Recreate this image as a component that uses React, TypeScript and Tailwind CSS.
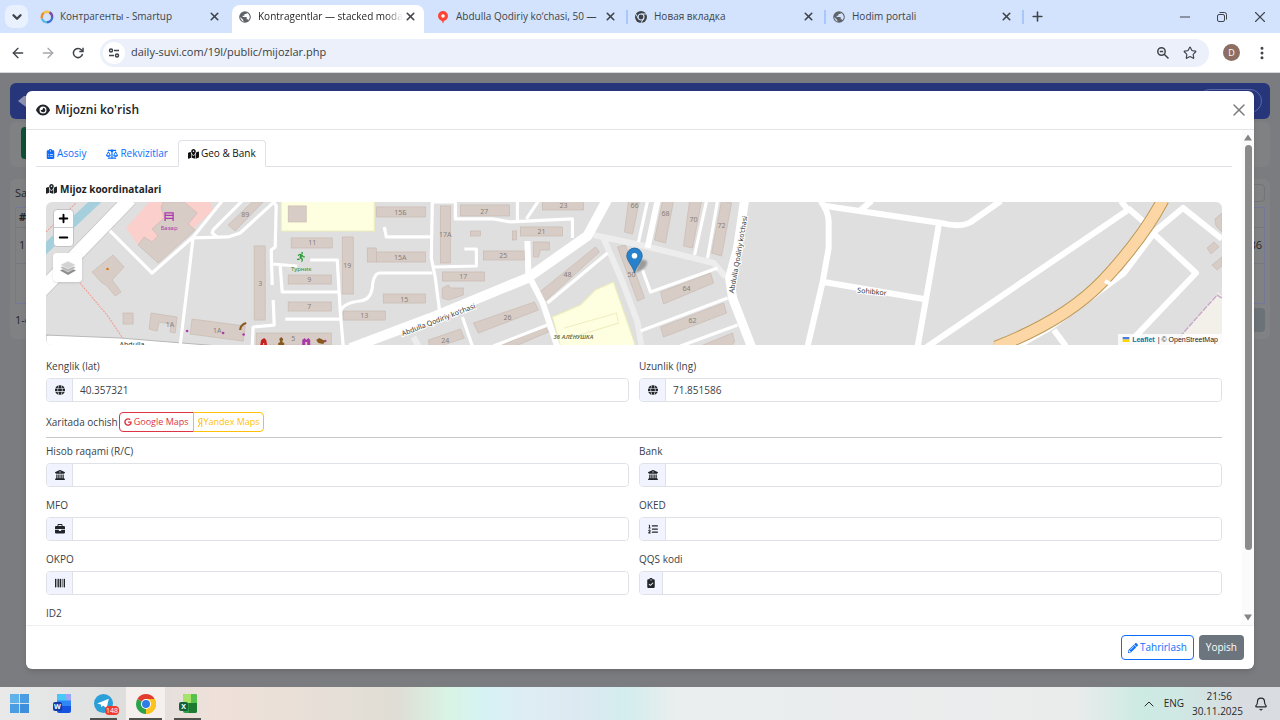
import type { ComponentType, ReactNode } from "react";
import { clsx } from "clsx";
import { FaPencilAlt } from "react-icons/fa";
import {
  FaBarcode,
  FaBriefcase,
  FaBuildingColumns,
  FaClipboardCheck,
  FaClipboardList,
  FaEye,
  FaGlobe,
  FaGoogle,
  FaListOl,
  FaMapLocationDot,
  FaPersonRunning,
  FaScaleBalanced,
  FaYandex,
} from "react-icons/fa6";
import {
  ArrowLeft,
  ArrowRight,
  Bell,
  ChevronDown,
  ChevronUp,
  EllipsisVertical,
  Minus,
  Plus,
  Star,
  X,
} from "lucide-react";

type IconType = ComponentType<{ className?: string }>;

function SmartupIcon() {
  return (
    <svg viewBox="0 0 14 14" className="size-[14px]" fill="none" strokeWidth="2.4">
      <path d="M2 8.5A5.2 5.2 0 0 1 4 2.8" stroke="#f28c28" />
      <path d="M4 2.8A5.2 5.2 0 0 1 9.5 2.4" stroke="#f6c344" />
      <path d="M9.5 2.4A5.2 5.2 0 0 1 12.2 7" stroke="#7b4fa3" />
      <path d="M12.2 7A5.2 5.2 0 0 1 7 12.2" stroke="#3a6fd8" />
      <path d="M7 12.2A5.2 5.2 0 0 1 2 8.5" stroke="#59b7e8" />
    </svg>
  );
}

function GlobeIcon() {
  return (
    <svg viewBox="0 0 24 24" className="size-[14px]" fill="#5f6368">
      <path d="M12 2a10 10 0 1 0 0 20 10 10 0 0 0 0-20Zm-8 10 5 5v1a2 2 0 0 0 2 2c-4-.4-7-4-7-8Zm14 5.4a2 2 0 0 0-2-1.4h-1v-3a1 1 0 0 0-1-1H8v-2h2a1 1 0 0 0 1-1V7h2a2 2 0 0 0 2-2v-.4a8 8 0 0 1 3 12.800Z" />
    </svg>
  );
}

function PinIcon() {
  return (
    <svg viewBox="0 0 14 14" className="size-[14px]">
      <path d="M7 1a5 5 0 0 0-5 5c0 2.6 2 4.2 4 5l1 2.6L8 11c2-.8 4-2.4 4-5a5 5 0 0 0-5-5Z" fill="#f43" />
      <circle cx="7" cy="6" r="1.8" fill="#fff" />
    </svg>
  );
}

function ChromeGrayIcon() {
  return (
    <svg viewBox="0 0 14 14" className="size-[14px]">
      <circle cx="7" cy="7" r="6" fill="#3f4347" />
      <circle cx="7" cy="7" r="3" fill="#3f4347" stroke="#d3e3fd" strokeWidth="1.2" />
      <path d="M7 4h5.500M4.400 8.500 1.800 4M9.600 8.500 7 13" stroke="#d3e3fd" />
    </svg>
  );
}

const browserTabs = [
  { title: "Контрагенты - Smartup", icon: <SmartupIcon /> },
  { title: "Kontragentlar — stacked modal", icon: <GlobeIcon />, active: true },
  { title: "Abdulla Qodiriy ko‘chasi, 50 —", icon: <PinIcon /> },
  { title: "Новая вкладка", icon: <ChromeGrayIcon /> },
  { title: "Hodim portali", icon: <GlobeIcon /> },
];

function TabStrip() {
  return (
    <div className="flex h-[33px] shrink-0 bg-[#d3e3fd] pl-[5px] text-[#40444a]">
      <button
        aria-label="Search tabs"
        className="mt-[5px] mr-[6px] flex size-[23px] shrink-0 items-center justify-center rounded-lg bg-[#e9f1fe]"
      >
        <ChevronDown className="size-[14px]" strokeWidth={4} />
      </button>
      {browserTabs.map((tab, i) => (
        <div
          key={tab.title}
          className={clsx(
            "flex min-w-0 flex-1 items-center pl-[6px]",
            tab.active
              ? "mt-[5px] mr-[6px] max-w-[192px] rounded-t-lg bg-white pb-[5px]"
              : "max-w-[198px]"
          )}
        >
          <span className="shrink-0">{tab.icon}</span>
          <span
            className={clsx(
              "ml-[6px] flex-1 overflow-hidden text-[10px] whitespace-nowrap",
              tab.active &&
                "text-[#1f1f1f] [mask-image:linear-gradient(to_right,#000_88%,transparent)]"
            )}
          >
            {tab.title}
          </span>
          <button
            aria-label={`Close ${tab.title}`}
            className={clsx("ml-px shrink-0", tab.active ? "mr-[5px]" : "mr-[9px]")}
          >
            <X className="size-[13px]" strokeWidth={3} />
          </button>
          <span
            className={clsx("h-[14px] w-[2px] shrink-0", i > 1 && "bg-[#a8c7fa]")}
          />
        </div>
      ))}
      <button aria-label="New tab" className="ml-[6px] shrink-0">
        <Plus className="size-[15px]" strokeWidth={2.5} />
      </button>
      <div className="ml-auto flex shrink-0 items-center gap-[21px] pr-[11px]">
        <button aria-label="Minimize">
          <Minus className="size-4" strokeWidth={1.5} />
        </button>
        <button aria-label="Restore">
          <svg viewBox="0 0 16 16" className="size-4" fill="none" stroke="currentColor">
            <rect x="3.5" y="5.5" width="7" height="7" rx="1.5" />
            <path d="M5.500 3.500h5a2 2 0 0 1 2 2v5" />
          </svg>
        </button>
        <button aria-label="Close window">
          <X className="size-[18px]" strokeWidth={1.5} />
        </button>
      </div>
    </div>
  );
}

function Toolbar() {
  return (
    <div className="flex h-10 shrink-0 items-center border-b border-[#d5d7da] bg-white px-[10px] text-[#40444a]">
      <button aria-label="Back">
        <ArrowLeft className="size-4" />
      </button>
      <button aria-label="Forward" className="ml-[14px] text-[#a5a7aa]">
        <ArrowRight className="size-4" />
      </button>
      <button aria-label="Reload" className="ml-[14px]">
        <svg viewBox="0 0 16 16" className="size-4" fill="none" stroke="currentColor" strokeWidth="1.5">
          <path d="M12.500 9A4.600 4.600 0 1 1 11.500 5L12.800 6.300" />
          <path d="M13 2.800V6.500H9.300" />
        </svg>
      </button>
      <div className="ml-[14px] flex h-7 flex-1 items-center rounded-full bg-[#ebf0fa] pr-3 pl-[3px]">
        <button
          aria-label="Site information"
          className="flex size-[22px] items-center justify-center rounded-full bg-white"
        >
          <svg viewBox="0 0 12 12" className="size-3" fill="none" stroke="currentColor" strokeWidth="1.5">
            <circle cx="3" cy="3.5" r="1.5" />
            <path d="M6 3.500h5M1 8.500h5" />
            <circle cx="9" cy="8.5" r="1.5" />
          </svg>
        </button>
        <input
          aria-label="Address"
          defaultValue="daily-suvi.com/19l/public/mijozlar.php"
          className="ml-[6px] min-w-0 flex-1 bg-transparent text-[11px] text-[#3a3d42] outline-none"
        />
        <button aria-label="Zoom">
          <svg viewBox="0 0 14 14" className="size-[14px]" fill="none" stroke="currentColor" strokeWidth="1.5">
            <circle cx="5.5" cy="5.5" r="3.7" />
            <path d="M8.200 8.200 12.500 12.500M3.800 5.500h3.400" />
          </svg>
        </button>
        <button aria-label="Bookmark" className="ml-[13px]">
          <Star className="size-[14px]" />
        </button>
      </div>
      <button className="ml-[14px] flex size-[17px] items-center justify-center rounded-full bg-[#8d6e63] text-[9px] text-white">
        D
      </button>
      <button aria-label="Menu" className="ml-[14px]">
        <EllipsisVertical className="size-4" strokeWidth={2.5} />
      </button>
    </div>
  );
}

// The dimmed customer list under the dialog
function PageBehind() {
  return (
    <div className="h-full px-[10px] pt-[10px] text-[11px] text-[#24262b]">
      <div className="flex h-9 items-center rounded-md bg-[#27357b] px-2">
        <svg viewBox="0 0 16 12" className="h-3 w-4" fill="#8d93b0">
          <path d="M0 6 6 1h6l4 5-8 6Z" />
        </svg>
        <span className="ml-auto h-6 w-16 rounded-full border border-[#5b68a8]" />
      </div>
      <div className="mt-[3px] h-[45px] rounded-md bg-[#808183] p-[5px]">
        <div className="ml-[6px] h-8 w-12 rounded-sm bg-[#0f5135]" />
      </div>
      <div className="mt-3 h-[160px] rounded-md bg-[#808183] px-[5px] pt-1">
        <div className="flex h-5 items-center justify-between">
          <span>Sa</span>
          <span className="h-[18px] w-20 rounded-sm border border-[#727478]" />
        </div>
        <table className="mt-1 h-[96px] w-full border border-[#74779a]">
          <tbody>
            <tr className="h-5 border-b border-[#74777d]">
              <th className="pl-[3px] text-left">#</th>
              <th />
            </tr>
            <tr className="h-9 border-b border-[#74777d]">
              <td className="pl-[3px]">1</td>
              <td className="pr-[2px] text-right">86</td>
            </tr>
            <tr className="h-10">
              <td />
              <td />
            </tr>
          </tbody>
        </table>
        <div className="mt-1 flex items-center justify-between">
          <span>1-d</span>
          <span className="h-6 w-8 rounded-sm bg-[#6c7378]" />
        </div>
      </div>
    </div>
  );
}

const blocks = [
  [288, 206, 18, 16], [291, 238, 41, 10], [288, 275, 43, 9], [288, 302, 43, 9],
  [256, 333, 75, 12], [254, 246, 11, 74], [123, 313, 10, 11], [376, 207, 49, 10],
  [342, 237, 11, 57], [440, 206, 10, 57], [460, 205, 49, 11], [542, 201, 41, 9],
  [520, 227, 42, 9], [483, 251, 41, 9], [376, 252, 49, 10], [367, 248, 9, 14],
  [442, 272, 42, 9], [383, 294, 42, 9], [343, 311, 42, 9], [470, 231, 10, 5],
  [512, 231, 4, 9],
];

const buildings = [
  "M138 245 144 237 152 242 158 236 152 229 164 218 161 207 163 202H184L197 213 188 224 195 230 158 263Z",
  "M92 272 113 255 124 267 112 280 121 292 115 296 106 285 102 283Z",
  "M151 313 177 317 175 333 170 332 171 324 159 322 157 331 149 329Z",
  "M192 319 245 326 243 341 190 334Z",
  "M228 225 252 202H263L235 231Z",
  "M533 242H549V250H540L538 257H533Z",
  "M442 288 448 285 450 288H463V295L448 300 442 298Z",
  "M473 323 534 302 538 310 478 333Z",
  "M428 340 460 329 464 338 440 346H429Z",
  "M500 346 544 326 548 332 515 346Z",
  "M538 293 595 247 599 252 545 301Z",
  "M617 247 625 245 644 298 637 301Z",
  "M628 201H639L632 234 624 232Z",
  "M662 201H673L665 243 654 240Z",
  "M689 201H701L692 248 683 246Z",
  "M721 201 731 203 721 256 711 253Z",
  "M660 292 710 273 713 283 663 304Z",
  "M660 327 723 303 726 313 663 337Z",
  "M700 346 732 333 734 342 730 346Z",
  "M1206 248 1213 242 1218 247 1210 254Z",
  "M1211 265 1221 257V266L1216 270Z",
  "M1214 219 1221 213V232L1215 226Z",
];

const lanes = [
  "M107 228 152 273 193 237 222 201",
  "M193 237 190 263 180 346",
  "M193 238 228 237 240 233 275 201",
  "M217 237 212 233 213 230 242 201",
  "M273 201 276 206 275 247 271 250 272 285",
  "M272 264 297 266M280 266 282 292H338M310 260H337L340 312 343 346M285 319H340",
  "M273 300 274 325 253 327 252 346",
  "M432 201 431 258 435 278 440 317",
  "M384 227 386 237H431M434 267 476 266V249H464",
  "M432 273H380Q373 273 372 288 370 300 360 301 342 303 340 312",
  "M432 202H455V219H493L510 222 572 219V238",
  "M517 201V220M538 201 526 219",
  "M547 303 607 253M462 317 472 346M493 346 547 325",
  "M647 201 638 242M706 201 694 255M717 201 707 258",
  "M642 270 650 292 717 268M640 331 727 298M680 346 737 325",
];

const streets = [
  "M527 241 528 275 542 302 557 347",
  "M657 201 647 248",
  "M820 201Q828 212 828 222V248L822 282 807 346",
  "M825 206 940 223Q960 228 970 222L1000 201M860 210 871 201",
  "M938 225 930 272 917 346M823 282 923 299",
  "M926 347 1127 210 1120 201M1127 208 1143 222",
  "M1153 233 1123 273 1100 290 1050 327 1015 347",
  "M1152 233 1182 208 1221 239M1153 234 1195 273 1130 341M1053 330 1065 346",
];

const houseNumbers: [string, number, number][] = [
  ["89", 245, 217], ["11", 312, 245], ["9", 309, 282], ["7", 309, 309],
  ["5", 293, 341], ["3", 260, 286], ["1A", 170, 327], ["1A", 217, 333],
  ["15Б", 400, 215], ["19", 347, 268], ["17A", 445, 237], ["27", 484, 214],
  ["23", 563, 208], ["21", 541, 234], ["25", 503, 258], ["15A", 400, 260],
  ["17", 463, 279], ["15", 404, 302], ["13", 364, 318], ["48", 567, 277],
  ["26", 507, 320], ["24", 445, 343], ["50", 631, 277], ["66", 634, 208],
  ["68", 665, 216], ["70", 693, 222], ["72", 721, 228], ["64", 686, 291],
  ["62", 692, 323],
];

function StreetMap() {
  return (
    <svg
      viewBox="46 202 1175 143"
      preserveAspectRatio="xMidYMid slice"
      className="h-full w-full bg-[#dfdfdf]"
      fontFamily="'Noto Sans', sans-serif"
      textAnchor="middle"
    >
      <path d="M126 228 150 201H210L213 210 171 250 158 262 138 245Z" fill="#fbcfcb" />
      <path d="M281 201H374V231H281Z" fill="#fefee0" stroke="#eeeeb8" />
      <path d="M552 317 580 305 595 290 613 282 635 346H560Z" fill="#fefee0" stroke="#eeeeb8" />
      <path d="M564 328 616 313 618 323 573 337" fill="none" stroke="#eeeec0" />
      <path d="M1217 292 1221 296V346H1170Z" fill="#f3efe9" />
      <path d="M1221 298 1216 295 1176 340" fill="none" stroke="#c5aacb" strokeWidth="1.5" strokeDasharray="6 1" />
      <path d="M42 252 98 199" stroke="#a5cfdd" strokeWidth="9" />
      <path d="M46 232 76 203M80 283 107 315 128 346" fill="none" stroke="#f29a92" strokeDasharray="2 1" />
      <path d="M46 335 120 338 220 346H46Z" fill="#fff" stroke="#b8b8b8" />

      <g fill="#d8cdc6" stroke="#c8bab1" strokeWidth=".7">
        {blocks.map(([x, y, w, h]) => (
          <rect key={`${x}-${y}`} x={x} y={y} width={w} height={h} />
        ))}
        {buildings.map((d) => (
          <path key={d} d={d} />
        ))}
      </g>

      <g fill="none" strokeLinejoin="round">
        <path d="M593 235 640 245 713 263 725 277M603 238 622 282 637 322 641 347M413 337 418 346" stroke="#ededed" strokeWidth="6" />
        <g stroke="#fff" strokeWidth="3.2">
          {lanes.map((d) => (
            <path key={d} d={d} />
          ))}
        </g>
        <g stroke="#fff" strokeWidth="6">
          {streets.map((d) => (
            <path key={d} d={d} />
          ))}
        </g>
        <path d="M40 292 130 199" stroke="#c4c4c4" strokeWidth="15" />
        <path d="M40 292 130 199" stroke="#fff" strokeWidth="13.5" />
        <path d="M350 348 430 318 527 278 587 236 607 199" stroke="#fff" strokeWidth="10" />
        <path d="M744 200 737 248 729 278 732 298 751 347" stroke="#fff" strokeWidth="9" />
        <path d="M1162 200Q1142 238 1103 280 1065 320 995 347" stroke="#bd9a58" strokeWidth="13" />
        <path d="M1162 200Q1142 238 1103 280 1065 320 995 347" stroke="#fcd6a4" strokeWidth="11" />
        <path d="M1104 281 1110 284" stroke="#fff" strokeWidth="4" />
      </g>

      <g fill="#85807c" fontSize="7">
        {houseNumbers.map(([n, x, y]) => (
          <text key={`${n}-${x}`} x={x} y={y}>
            {n}
          </text>
        ))}
      </g>

      <g fill="#333" stroke="#fff" strokeWidth="2" paintOrder="stroke" fontSize="7">
        <text transform="translate(439 322) rotate(-21)">Abdulla Qodiriy ko‘chasi</text>
        <text transform="translate(740 255) rotate(-80)">Abdulla Qodiriy ko‘chasi</text>
        <text transform="translate(871 294) rotate(6)">Sohibkor</text>
        <text x="132" y="347">Abdulla</text>
      </g>
      <text x="573" y="339" fontSize="6" fontStyle="italic" fontWeight="600" fill="#6b6b3a">36 АЛЁНУШКА</text>
      <text x="169" y="230" fontSize="6" fill="#ac39ac">Базар</text>
      <path d="M165 221V213H173V221M165 215.500H173M165 218.500H173" fill="none" stroke="#ac39ac" strokeWidth="1.3" />
      <text x="301" y="271" fontSize="6" fill="#1f8f2f">Турник</text>
      <FaPersonRunning x="296" y="252" width="10" height="10" color="#2f9e3a" />

      <circle cx="107.5" cy="269" r="1.3" fill="#d9790b" />
      <g fill="#ac39ac">
        <circle cx="187" cy="331" r="1.3" />
        <circle cx="223" cy="333" r="1.3" />
        <circle cx="243.5" cy="334.5" r="1.3" />
        <circle cx="325" cy="341" r="1.3" />
        <path d="M302 345V340L304.500 338 306 340 308 338 310 340V345H307V342H305V345Z" />
      </g>
      <path d="M240 330Q240 325 246 323" fill="none" stroke="#87591c" strokeWidth="2.2" />
      <path d="M260 345 261 340 264 338 266 340 267 345H264V343H263V345Z" fill="#c81e1e" />
      <path d="M278 345V343L280 342 279 339 281 337 283 339 282 342 284 343V345Z" fill="#87591c" />
      <path d="M316 340 319 338 325 341 323 344 318 343Z" fill="#87591c" />
    </svg>
  );
}

function MapPanel() {
  return (
    <div className="relative h-[143px] overflow-hidden rounded-md">
      <StreetMap />
      <div className="absolute top-[7px] left-[7px] flex flex-col rounded-sm border border-[#c3c3c3] bg-white text-black">
        <button aria-label="Zoom in" className="flex h-[18px] w-[19px] items-center justify-center border-b border-[#ccc]">
          <Plus className="size-[13px]" strokeWidth={3.5} />
        </button>
        <button aria-label="Zoom out" className="flex h-[18px] w-[19px] items-center justify-center">
          <Minus className="size-[13px]" strokeWidth={3.5} />
        </button>
      </div>
      <button
        aria-label="Layers"
        className="absolute top-[51px] left-[7px] flex size-[29px] items-center justify-center rounded bg-white shadow"
      >
        <svg viewBox="0 0 18 18" className="size-[18px]">
          <path d="M1 11.500 9 7.500 17 11.500 9 16Z" fill="#8e8e8e" />
          <path d="M1 8.500 9 4.500 17 8.500 9 13Z" fill="#b5b5b5" stroke="#fff" strokeWidth=".5" />
          <path d="M1 6 9 2 17 6 9 10Z" fill="#d3d3d3" stroke="#fff" strokeWidth=".5" />
        </svg>
      </button>
      <svg viewBox="0 0 30 28" className="absolute top-[45px] left-1/2 h-7 w-[30px] -translate-x-[8px]">
        <path d="M9 26 14 13Q22 12 21 17 19 23 9 26Z" fill="#000" opacity=".3" className="blur-[1px]" />
        <path
          d="M8.500 26C7 19 .800 14 .800 8.800A7.700 7.700 0 0 1 16.200 8.800C16.200 14 10 19 8.500 26Z"
          fill="#2a81cb"
          stroke="#2a6fa8"
        />
        <circle cx="8.5" cy="8.8" r="2.8" fill="#fff" />
      </svg>
      <div className="absolute right-0 bottom-0 flex items-center bg-white/80 px-1 font-['Liberation_Sans',sans-serif] text-[7px] leading-[11px] text-[#222]">
        <svg viewBox="0 0 8 6" className="mr-[2px] h-[5px] w-2">
          <path d="M0 0h8v3H0Z" fill="#4c7be1" />
          <path d="M0 3h8v3H0Z" fill="#ffd500" />
        </svg>
        <a href="#leaflet" className="font-bold text-[#0078a8]">
          Leaflet
        </a>
        <span className="ml-[3px]">| © OpenStreetMap</span>
      </div>
    </div>
  );
}

function Field({
  id,
  label,
  icon: Icon,
  value,
  narrow,
}: {
  id: string;
  label: string;
  icon: IconType;
  value?: string;
  narrow?: boolean;
}) {
  return (
    <div>
      <label htmlFor={id} className="mb-1 block leading-4 text-[#3c4045]">
        {label}
      </label>
      <div className="flex h-6 rounded border border-[#dee2e6]">
        <span
          className={clsx(
            "flex shrink-0 items-center justify-center rounded-l-[3px] border-r border-[#dee2e6] bg-[#f1f4ff]",
            narrow ? "w-[23px]" : "w-[26px]"
          )}
        >
          <Icon className="size-[10px]" />
        </span>
        <input
          id={id}
          defaultValue={value}
          className="min-w-0 flex-1 rounded-r bg-white px-[7px] text-[#3c4045] outline-none"
        />
      </div>
    </div>
  );
}

function NavTab({
  icon: Icon,
  iconClass,
  active,
  children,
}: {
  icon: IconType;
  iconClass: string;
  active?: boolean;
  children: ReactNode;
}) {
  return (
    <button
      role="tab"
      aria-selected={!!active}
      className={clsx(
        "-mb-px flex h-[27px] items-center gap-[2px] rounded-t border px-[9px]",
        active
          ? "border-[#dee2e6] border-b-white bg-white text-[#111]"
          : "border-transparent text-[#0d6efd]"
      )}
    >
      <Icon className={iconClass} />
      {children}
    </button>
  );
}

function Scrollbar() {
  return (
    <div className="flex w-3 shrink-0 flex-col items-center bg-[#fbfbfb] py-1">
      <svg viewBox="0 0 8 6" className="h-[7px] w-2" fill="#858585">
        <path d="M4 0 8 6H0Z" />
      </svg>
      <div className="my-1 min-h-0 w-[7px] flex-1">
        <div className="h-[87%] rounded-full bg-[#8b8b8b]" />
      </div>
      <svg viewBox="0 0 8 6" className="h-[7px] w-2" fill="#858585">
        <path d="M0 0H8L4 6Z" />
      </svg>
    </div>
  );
}

function CustomerModal() {
  return (
    <div
      role="dialog"
      aria-label="Mijozni ko'rish"
      className="absolute inset-x-[26px] top-[18px] bottom-[18px] flex flex-col overflow-hidden rounded-md bg-white text-[10px] text-[#212529] shadow-md"
    >
      <div className="flex h-[39px] shrink-0 items-center border-b border-[#e3e5e8] px-[10px]">
        <FaEye className="size-[14px]" />
        <h5 className="ml-[5px] text-[12px] font-semibold">Mijozni ko'rish</h5>
        <button aria-label="Close" className="-mr-[5px] ml-auto text-[#7c7c7c]">
          <X className="size-5" strokeWidth={1.75} />
        </button>
      </div>

      <div className="flex min-h-0 flex-1">
        <div className="min-w-0 flex-1 overflow-hidden px-[10px] pt-[10px]">
          <div role="tablist" className="flex border-b border-[#dee2e6]">
            <NavTab icon={FaClipboardList} iconClass="h-[10px] w-[9px]">
              Asosiy
            </NavTab>
            <NavTab icon={FaScaleBalanced} iconClass="h-[10px] w-3">
              Rekvizitlar
            </NavTab>
            <NavTab icon={FaMapLocationDot} iconClass="h-[10px] w-[11px]" active>
              Geo &amp; Bank
            </NavTab>
          </div>

          <div className="px-[10px] pt-[14px]">
            <h6 className="mb-[5px] flex items-center gap-[3px] leading-4 font-bold">
              <FaMapLocationDot className="h-[10px] w-[11px]" />
              Mijoz koordinatalari
            </h6>
            <MapPanel />

            <div className="mt-[13px] grid grid-cols-2 gap-[10px]">
              <Field id="lat" label="Kenglik (lat)" icon={FaGlobe} value="40.357321" />
              <Field id="lng" label="Uzunlik (lng)" icon={FaGlobe} value="71.851586" />
            </div>

            <div className="mt-[10px] mb-[5px] flex h-5 items-center text-[#3c4045]">
              <span className="mr-px">Xaritada ochish</span>
              <a
                href="#google"
                className="flex h-5 items-center gap-[2px] rounded-l-sm border border-[#dc3545] px-1 text-[9px] text-[#dc3545]"
              >
                <FaGoogle className="size-[8px]" />
                Google Maps
              </a>
              <a
                href="#yandex"
                className="-ml-px flex h-5 items-center gap-px rounded-r-sm border border-[#ffc107] px-[3px] text-[9px] text-[#ffc107]"
              >
                <FaYandex className="h-[9px] w-[6px]" />
                Yandex Maps
              </a>
            </div>
            <hr className="mb-[5px] border-[#c8c9cb]" />

            <div className="grid grid-cols-2 gap-[10px]">
              <Field id="account" label="Hisob raqami (R/C)" icon={FaBuildingColumns} />
              <Field id="bank" label="Bank" icon={FaBuildingColumns} />
              <Field id="mfo" label="MFO" icon={FaBriefcase} />
              <Field id="oked" label="OKED" icon={FaListOl} />
              <Field id="okpo" label="OKPO" icon={FaBarcode} />
              <Field id="qqs" label="QQS kodi" icon={FaClipboardCheck} narrow />
              <Field id="id2" label="ID2" icon={FaBarcode} />
            </div>
          </div>
        </div>
        <Scrollbar />
      </div>

      <div className="flex h-11 shrink-0 items-center justify-end gap-[5px] border-t border-[#eceef0] px-[10px]">
        <button className="flex h-[25px] items-center gap-[2px] rounded border border-[#0d6efd] px-[6px] text-[#0d6efd]">
          <FaPencilAlt className="size-[10px]" />
          Tahrirlash
        </button>
        <button className="h-[25px] rounded bg-[#6c757d] px-[7px] text-white">Yopish</button>
      </div>
    </div>
  );
}

function TaskbarApp({
  label,
  open,
  active,
  children,
}: {
  label: string;
  open?: boolean;
  active?: boolean;
  children: ReactNode;
}) {
  return (
    <button
      aria-label={label}
      className={clsx(
        "relative flex h-full w-[39px] items-center justify-center",
        active && "bg-[#f5f0ed]"
      )}
    >
      {children}
      {open && (
        <span
          className={clsx(
            "absolute bottom-0 h-[2px] bg-[#50504c]",
            active ? "w-[33px]" : "w-[27px]"
          )}
        />
      )}
    </button>
  );
}

function Taskbar() {
  return (
    <div className="flex h-[33px] shrink-0 items-center gap-[3px] bg-[linear-gradient(to_right,#e9e9ea,#e2e3e3_7%,#dcdedd_9%,#efe1da_17%,#e6dfd7_26%,#dfddd5_31%,#d8f4e4_35%,#d6f2f4_38%,#deedf3_41%,#dde9f2_45%,#d3edee_49%,#ebeeee_53%,#eaecec_84%,#cdeae3_89%,#cfe8e3_92%,#d9dce1_97%)] text-[10px] text-[#25282c]">
      <TaskbarApp label="Start">
        <svg viewBox="0 0 18 18" className="size-[19px]" fill="#3d8edb">
          <path d="M0 0h8.600v8.600H0Z" fill="#5fb2ea" />
          <path d="M9.400 0H18v8.600H9.400ZM0 9.400h8.600V18H0Z" fill="#4a9de2" />
          <path d="M9.400 9.400H18V18H9.400Z" />
        </svg>
      </TaskbarApp>
      <TaskbarApp label="Word">
        <svg viewBox="0 0 18 19" className="h-[19px] w-[18px]">
          <rect x="4" width="14" height="19" rx="2" fill="#1552e0" />
          <path d="M4 2a2 2 0 0 1 2-2h10a2 2 0 0 1 2 2v5H4Z" fill="#46c9f8" />
          <path d="M12 0h4a2 2 0 0 1 2 2v5h-4Z" fill="#9fa2f5" />
          <path d="M4 6.500h14V12H4Z" fill="#2f86f5" />
          <rect y="8" width="9" height="9" rx="2" fill="#123ba8" />
          <text x="4.5" y="15" fontSize="7" fontWeight="700" fill="#fff" textAnchor="middle">W</text>
        </svg>
      </TaskbarApp>
      <TaskbarApp label="Telegram" open>
        <svg viewBox="0 0 18 18" className="size-[19px]">
          <circle cx="9" cy="9" r="9" fill="#2a9fd8" />
          <path d="M3 9 14 4.500 12 13.500 8.500 11 7 12.500 6.500 10Z" fill="#fff" />
        </svg>
        <span className="absolute right-[4px] bottom-[5px] rounded bg-[#f03a2e] px-px text-[7px] leading-[9px] text-white">
          148
        </span>
      </TaskbarApp>
      <TaskbarApp label="Chrome" open active>
        <svg viewBox="0 0 20 20" className="size-5">
          <path d="M10 10 1.340 5A10 10 0 0 1 18.660 5Z" fill="#e33b2e" />
          <path d="M10 10 18.660 5A10 10 0 0 1 10 20Z" fill="#fcc31e" />
          <path d="M10 10V20A10 10 0 0 1 1.340 5Z" fill="#2ba24c" />
          <path d="M10 5h8.700A10 10 0 0 1 10 20l4.300-7.500Z" fill="#fcc31e" />
          <circle cx="10" cy="10" r="5" fill="#fff" />
          <circle cx="10" cy="10" r="4" fill="#2f7be8" />
        </svg>
      </TaskbarApp>
      <TaskbarApp label="Excel" open>
        <svg viewBox="0 0 18 19" className="h-[19px] w-[18px]">
          <rect x="4" width="14" height="19" rx="2" fill="#2c9a3f" />
          <path d="M6 0h6v9H4V2a2 2 0 0 1 2-2Z" fill="#a6e36a" />
          <path d="M12 0h4a2 2 0 0 1 2 2v7h-6Z" fill="#56c24b" />
          <path d="M10 9h8v8a2 2 0 0 1-2 2h-6Z" fill="#1e7a33" />
          <rect y="8" width="9" height="9" rx="2" fill="#14603b" />
          <text x="4.5" y="15" fontSize="7" fontWeight="700" fill="#fff" textAnchor="middle">X</text>
        </svg>
      </TaskbarApp>

      <div className="ml-auto flex items-center pr-[12px]">
        <ChevronUp className="size-4" strokeWidth={1.5} />
        <span className="ml-[7px]">ENG</span>
        <div className="ml-[8px] text-right leading-[15px]">
          <div className="pr-[11px]">21:56</div>
          <div>30.11.2025</div>
        </div>
        <Bell className="ml-[11px] size-[14px]" />
      </div>
    </div>
  );
}

export default function App() {
  return (
    <div className="flex h-screen flex-col overflow-hidden font-['Open_Sans','Noto_Sans',sans-serif]">
      <TabStrip />
      <Toolbar />
      <main className="relative min-h-0 flex-1 bg-[#7b7c80]">
        <PageBehind />
        <CustomerModal />
      </main>
      <Taskbar />
    </div>
  );
}
